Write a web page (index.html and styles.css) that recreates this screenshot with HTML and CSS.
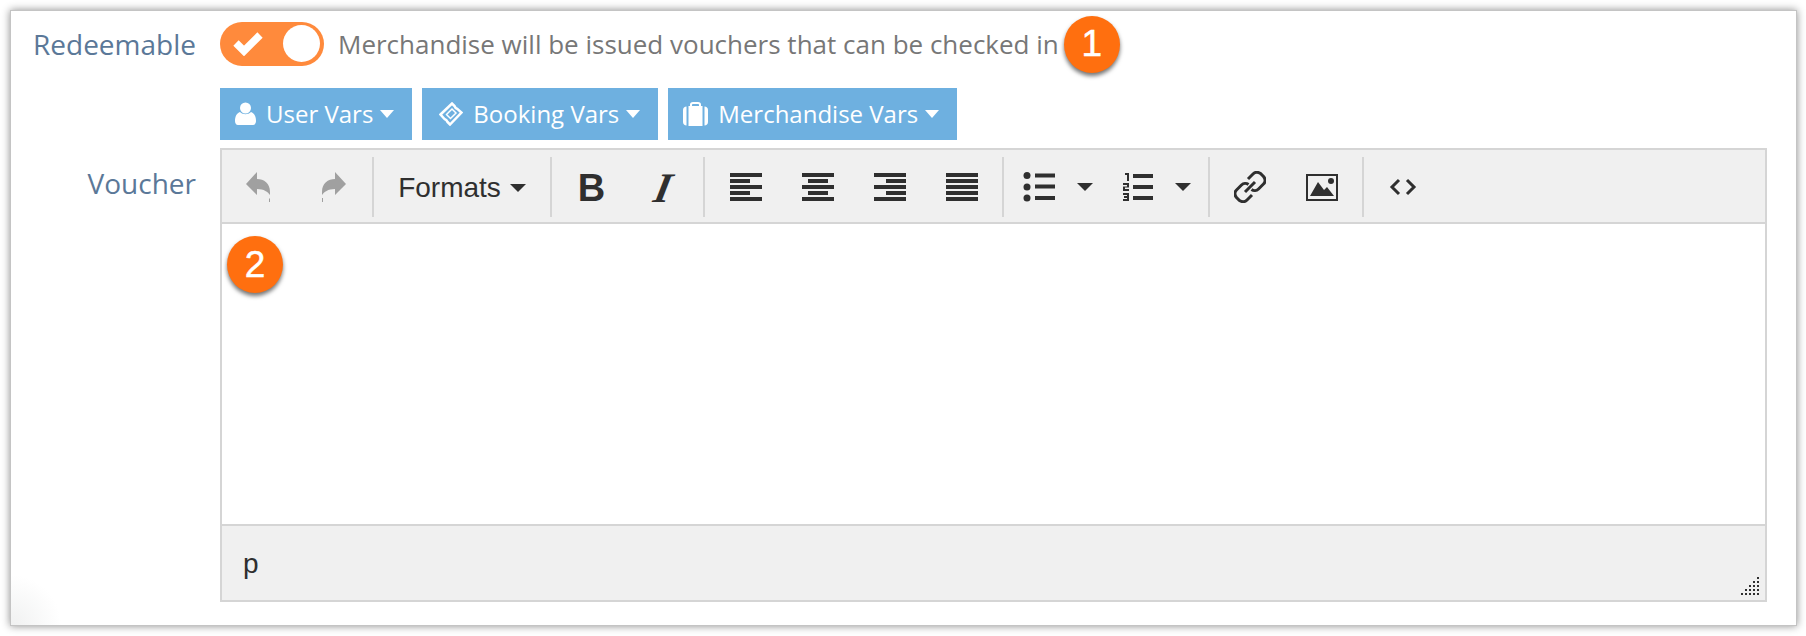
FILE: index.html
```html
<!DOCTYPE html>
<html lang="en">
<head>
    <meta charset="UTF-8">
    <title>Voucher settings</title>
    <link rel="stylesheet" href="styles.css">
</head>
<body>
    <div class="panel">
        <div class="form-row form-row_switch">
            <div class="form-row__label">Redeemable</div>
            <div class="switch-line">
                <div class="switch">
                    <svg class="switch__check" width="30" height="26" viewBox="0 0 30 26"><path d="M3 13l8 8L27 5" fill="none" stroke="#fff" stroke-width="7.500"/></svg>
                    <div class="switch__knob"></div>
                </div>
                <span class="switch-line__text">Merchandise will be issued vouchers that can be checked in</span>
                <span class="badge badge_inline">1</span>
            </div>
        </div>

        <div class="form-row form-row_vars">
            <div class="form-row__label"></div>
            <div class="vars">
                <button class="vars__btn" type="button">
                    <svg width="21" height="23" viewBox="0 0 21 23"><circle cx="10.5" cy="6" r="5.5" fill="#fff"/><path d="M0 19c0-5 2-8 5-9 3 3 8 3 11 0 3 1 5 4 5 9 0 2-1 4-3 4H3c-2 0-3-2-3-4z" fill="#fff"/></svg>
                    User Vars<i class="caret caret_white"></i>
                </button>
                <button class="vars__btn" type="button">
                    <svg class="vars__ticket" width="24" height="24" viewBox="0 0 24 24"><path d="M1.500 12.500L13 1.500l2.500 2.500c.5 1.500 1.500 2.500 3 3l4 3.500L11 22.500l-2.500-2.500c-.5-1.500-1.500-2.500-3-3z" fill="none" stroke="#fff" stroke-width="2.500"/><path d="M7.500 12.500l5.500-5.500 4 4-5.500 5.500z" fill="none" stroke="#fff" stroke-width="1.500"/></svg>
                    Booking Vars<i class="caret caret_white"></i>
                </button>
                <button class="vars__btn" type="button">
                    <svg width="25" height="24" viewBox="0 0 25 24"><path d="M8 5V2.500C8 1.500 9 1 10 1h5c1 0 2 .5 2 1.500V5" fill="none" stroke="#fff" stroke-width="2"/><rect x="5.500" y="4" width="14" height="20" fill="#fff"/><path d="M3.500 4.500C1.500 4.500 0 6 0 8v12c0 2 1.500 3.500 3.500 3.500zM21.500 4.500c2 0 3.500 1.500 3.500 3.500v12c0 2-1.500 3.500-3.500 3.500z" fill="#fff"/></svg>
                    Merchandise Vars<i class="caret caret_white"></i>
                </button>
            </div>
        </div>

        <div class="form-row">
            <div class="form-row__label form-row__label_editor">Voucher</div>
            <div class="editor">
                <div class="toolbar">
                    <div class="toolbar__group toolbar__group_history">
                        <div class="tool">
                            <svg width="24" height="30" viewBox="0 0 24 30"><path d="M0 12L11 0v7c7 0 13 4 13 13v3c-2-3-6-6-13-6v6z" fill="#a0a0a0"/><path d="M23 27l1-1v4h-1z" fill="#a0a0a0"/></svg>
                        </div>
                        <div class="tool">
                            <svg width="24" height="30" viewBox="0 0 24 30"><path d="M24 12L13 0v7C6 7 0 11 0 20v3c2-3 6-6 13-6v6z" fill="#a0a0a0"/><path d="M0 26h1v4H0z" fill="#a0a0a0"/></svg>
                        </div>
                    </div>
                    <div class="toolbar__group toolbar__group_formats">
                        <span class="formats">Formats<i class="caret"></i></span>
                    </div>
                    <div class="toolbar__group toolbar__group_style">
                        <div class="tool tool_bold">B</div>
                        <div class="tool tool_italic"><span>I</span></div>
                    </div>
                    <div class="toolbar__group toolbar__group_align">
                        <div class="tool">
                            <svg class="bars" width="32" height="28" viewBox="0 0 32 28"><path d="M0 0h32v4H0zM0 6h20v4H0zM0 12h32v4H0zM0 18h20v4H0zM0 24h32v4H0z"/></svg>
                        </div>
                        <div class="tool">
                            <svg class="bars" width="32" height="28" viewBox="0 0 32 28"><path d="M0 0h32v4H0zM6 6h20v4H6zM0 12h32v4H0zM6 18h20v4H6zM0 24h32v4H0z"/></svg>
                        </div>
                        <div class="tool">
                            <svg class="bars" width="32" height="28" viewBox="0 0 32 28"><path d="M0 0h32v4H0zM12 6h20v4H12zM0 12h32v4H0zM12 18h20v4H12zM0 24h32v4H0z"/></svg>
                        </div>
                        <div class="tool">
                            <svg class="bars" width="32" height="28" viewBox="0 0 32 28"><path d="M0 0h32v4H0zM0 6h32v4H0zM0 12h32v4H0zM0 18h32v4H0zM0 24h32v4H0z"/></svg>
                        </div>
                    </div>
                    <div class="toolbar__group toolbar__group_lists">
                        <div class="tool tool_split">
                            <svg class="bars" width="32" height="30" viewBox="0 0 32 30"><circle cx="4" cy="3.500" r="3.500"/><circle cx="4" cy="15" r="3.500"/><circle cx="4" cy="26" r="3.500"/><path d="M12 1.500h20v4H12zM12 12.500h20v4H12zM12 24h20v4H12z"/></svg>
                            <i class="caret"></i>
                        </div>
                        <div class="tool tool_split">
                            <svg class="bars" width="30" height="30" viewBox="0 0 30 30"><path d="M2 1h4v8H4V3H2zM0 11h6v4.500H2V17h4v2H0v-4.500h4V13H0zM0 21h6v8H0v-2h4v-1H1v-2h3v-1H0z"/><path d="M10 2h20v4H10zM10 13h20v4H10zM10 24h20v4H10z"/></svg>
                            <i class="caret"></i>
                        </div>
                    </div>
                    <div class="toolbar__group toolbar__group_insert">
                        <div class="tool">
                            <svg width="32" height="32" viewBox="0 0 32 32"><g fill="none" stroke="#2f2f2f" stroke-width="3"><path d="M14 8l5-5c2-2 5-2 7.500-.5l3 3c2 2.500 2 5.500 0 7.500l-5 5c-2 2-5 2-7 .5"/><path d="M18 24l-5 5c-2 2-5 2-7.500.5l-3-3C.5 24 .5 21 2.500 19l5-5c2-2 5-2 7-.5"/><path d="M11 21l10-10"/></g></svg>
                        </div>
                        <div class="tool">
                            <svg width="32" height="27" viewBox="0 0 32 27"><path d="M1 1h30v25H1z" fill="none" stroke="#2f2f2f" stroke-width="2"/><path d="M4 22l8-14 6 8 3-3 7 9z" fill="#2f2f2f"/><circle cx="25" cy="7" r="3" fill="#2f2f2f"/></svg>
                        </div>
                    </div>
                    <div class="toolbar__group toolbar__group_code">
                        <div class="tool">
                            <svg width="28" height="18" viewBox="0 0 28 18"><path d="M10 2L3 9l7 7M18 2l7 7-7 7" fill="none" stroke="#2f2f2f" stroke-width="3"/></svg>
                        </div>
                    </div>
                </div>
                <div class="editor__area">
                    <span class="badge badge_editor">2</span>
                </div>
                <div class="statusbar">
                    <span>p</span>
                    <svg class="statusbar__grip" width="18" height="18" viewBox="0 0 18 18"><path d="M16 0h2v2h-2zM12 4h2v2h-2zM16 4h2v2h-2zM8 8h2v2H8zM12 8h2v2h-2zM16 8h2v2h-2zM4 12h2v2H4zM8 12h2v2H8zM12 12h2v2h-2zM16 12h2v2h-2zM0 16h2v2H0zM4 16h2v2H4zM8 16h2v2H8zM12 16h2v2h-2zM16 16h2v2h-2z" fill="#2f2f2f"/></svg>
                </div>
            </div>
        </div>
    </div>
</body>
</html>
```

FILE: styles.css
```css
* {
    box-sizing: border-box;
}
html, body {
    height: 100%;
}
body {
    margin: 0;
    padding: 10px 9px 10px 10px;
    background: #fff;
    font-family: "Open Sans", sans-serif;
}
.panel {
    height: 100%;
    padding: 12px 29px 0 0;
    background: radial-gradient(circle at 0 100%, #f0f1f1, #fff 50px);
    border: 1px solid #c4c4c4;
    box-shadow: 0 0 8px rgba(0, 0, 0, .45);
}
.form-row {
    display: grid;
    grid-template-columns: 185px 1fr;
    column-gap: 24px;
}
.form-row_switch {
    margin-top: -1px;
    margin-bottom: 22px;
}
.form-row_vars {
    margin-bottom: 8px;
}
.form-row__label {
    font-size: 28px;
    line-height: 44px;
    color: #5b7898;
    text-align: right;
}
.form-row__label_editor {
    padding-top: 13px;
}

.switch-line {
    display: flex;
    align-items: center;
    height: 44px;
}
.switch-line__text {
    margin-left: 14px;
    font-size: 26px;
    color: #777;
}
.switch {
    position: relative;
    width: 104px;
    height: 44px;
    border-radius: 22px;
    background: #ff8a3c;
}
.switch__check {
    position: absolute;
    left: 13px;
    top: 8px;
}
.switch__knob {
    position: absolute;
    right: 4px;
    top: 3px;
    width: 37px;
    height: 37px;
    border-radius: 50%;
    background: #fff;
}

.badge {
    display: flex;
    align-items: center;
    justify-content: center;
    flex: none;
    width: 56px;
    height: 57px;
    border-radius: 50%;
    background: #ff6f0f;
    box-shadow: 0 3px 4px rgba(0, 0, 0, .55);
    font-family: "Liberation Sans", sans-serif;
    font-size: 37px;
    color: #fff;
    -webkit-text-stroke: .5px #fff;
}
.badge_inline {
    margin: 0 0 0 5px;
}
.badge_editor {
    position: absolute;
    left: 5px;
    top: 12px;
}

.vars {
    display: flex;
    gap: 10px;
}
.vars__btn {
    display: flex;
    align-items: center;
    height: 52px;
    padding: 0 18px 1px 15px;
    border: 0;
    background: #6eb0e0;
    font-family: "Open Sans", sans-serif;
    font-size: 24px;
    color: #fff;
}
.vars__btn svg {
    margin-right: 10px;
}
.vars__btn .vars__ticket {
    margin-right: 10px;
    margin-left: 2px;
}

.caret {
    display: inline-block;
    border-style: solid;
    border-width: 8px 8px 0;
    border-color: #2f2f2f transparent transparent;
}
.caret_white {
    margin-left: 7px;
    border-width: 8px 7px 0;
    border-top-color: #fff;
}

.editor {
    display: flex;
    flex-direction: column;
    height: 454px;
    border: 2px solid #d5d5d5;
    font-family: "Liberation Sans", sans-serif;
    color: #2f2f2f;
}
.toolbar {
    display: flex;
    align-items: center;
    flex: none;
    height: 74px;
    padding-top: 2px;
    border-bottom: 2px solid #d5d5d5;
    background: #f0f0f0;
}
.toolbar__group {
    display: flex;
    align-items: center;
    justify-content: center;
    flex: none;
    height: 60px;
    border-left: 2px solid #d5d5d5;
}
.toolbar__group_history {
    justify-content: flex-start;
    gap: 4px;
    width: 150px;
    border-left: 0;
}
.toolbar__group_formats {
    width: 178px;
}
.toolbar__group_style {
    width: 153px;
}
.toolbar__group_align {
    width: 299px;
}
.toolbar__group_lists {
    width: 206px;
}
.toolbar__group_insert {
    width: 154px;
}
.toolbar__group_code {
    width: 80px;
}
.tool {
    display: flex;
    align-items: center;
    justify-content: center;
    width: 72px;
    height: 60px;
}
.tool_bold {
    padding-top: 2px;
    font-size: 38px;
    font-weight: bold;
}
.tool_italic {
    padding-top: 2px;
    font-family: "Liberation Serif", serif;
    font-size: 42px;
    font-style: italic;
    font-weight: bold;
}
.tool_italic span {
    transform: skewX(-12deg);
}
.tool_split {
    justify-content: flex-start;
    width: 100px;
    padding-left: 17px;
}
.tool_split .caret {
    margin-left: 22px;
}
.bars {
    fill: #2f2f2f;
}
.formats {
    display: flex;
    align-items: center;
    padding-top: 2px;
    font-size: 28px;
}
.formats .caret {
    margin-left: 9px;
}

.editor__area {
    position: relative;
    flex: 1;
    background: #fff;
}
.statusbar {
    position: relative;
    display: flex;
    align-items: center;
    flex: none;
    height: 76px;
    padding: 2px 0 0 21px;
    border-top: 2px solid #d5d5d5;
    background: #f0f0f0;
    font-size: 28px;
}
.statusbar__grip {
    position: absolute;
    right: 6px;
    bottom: 5px;
}
```
